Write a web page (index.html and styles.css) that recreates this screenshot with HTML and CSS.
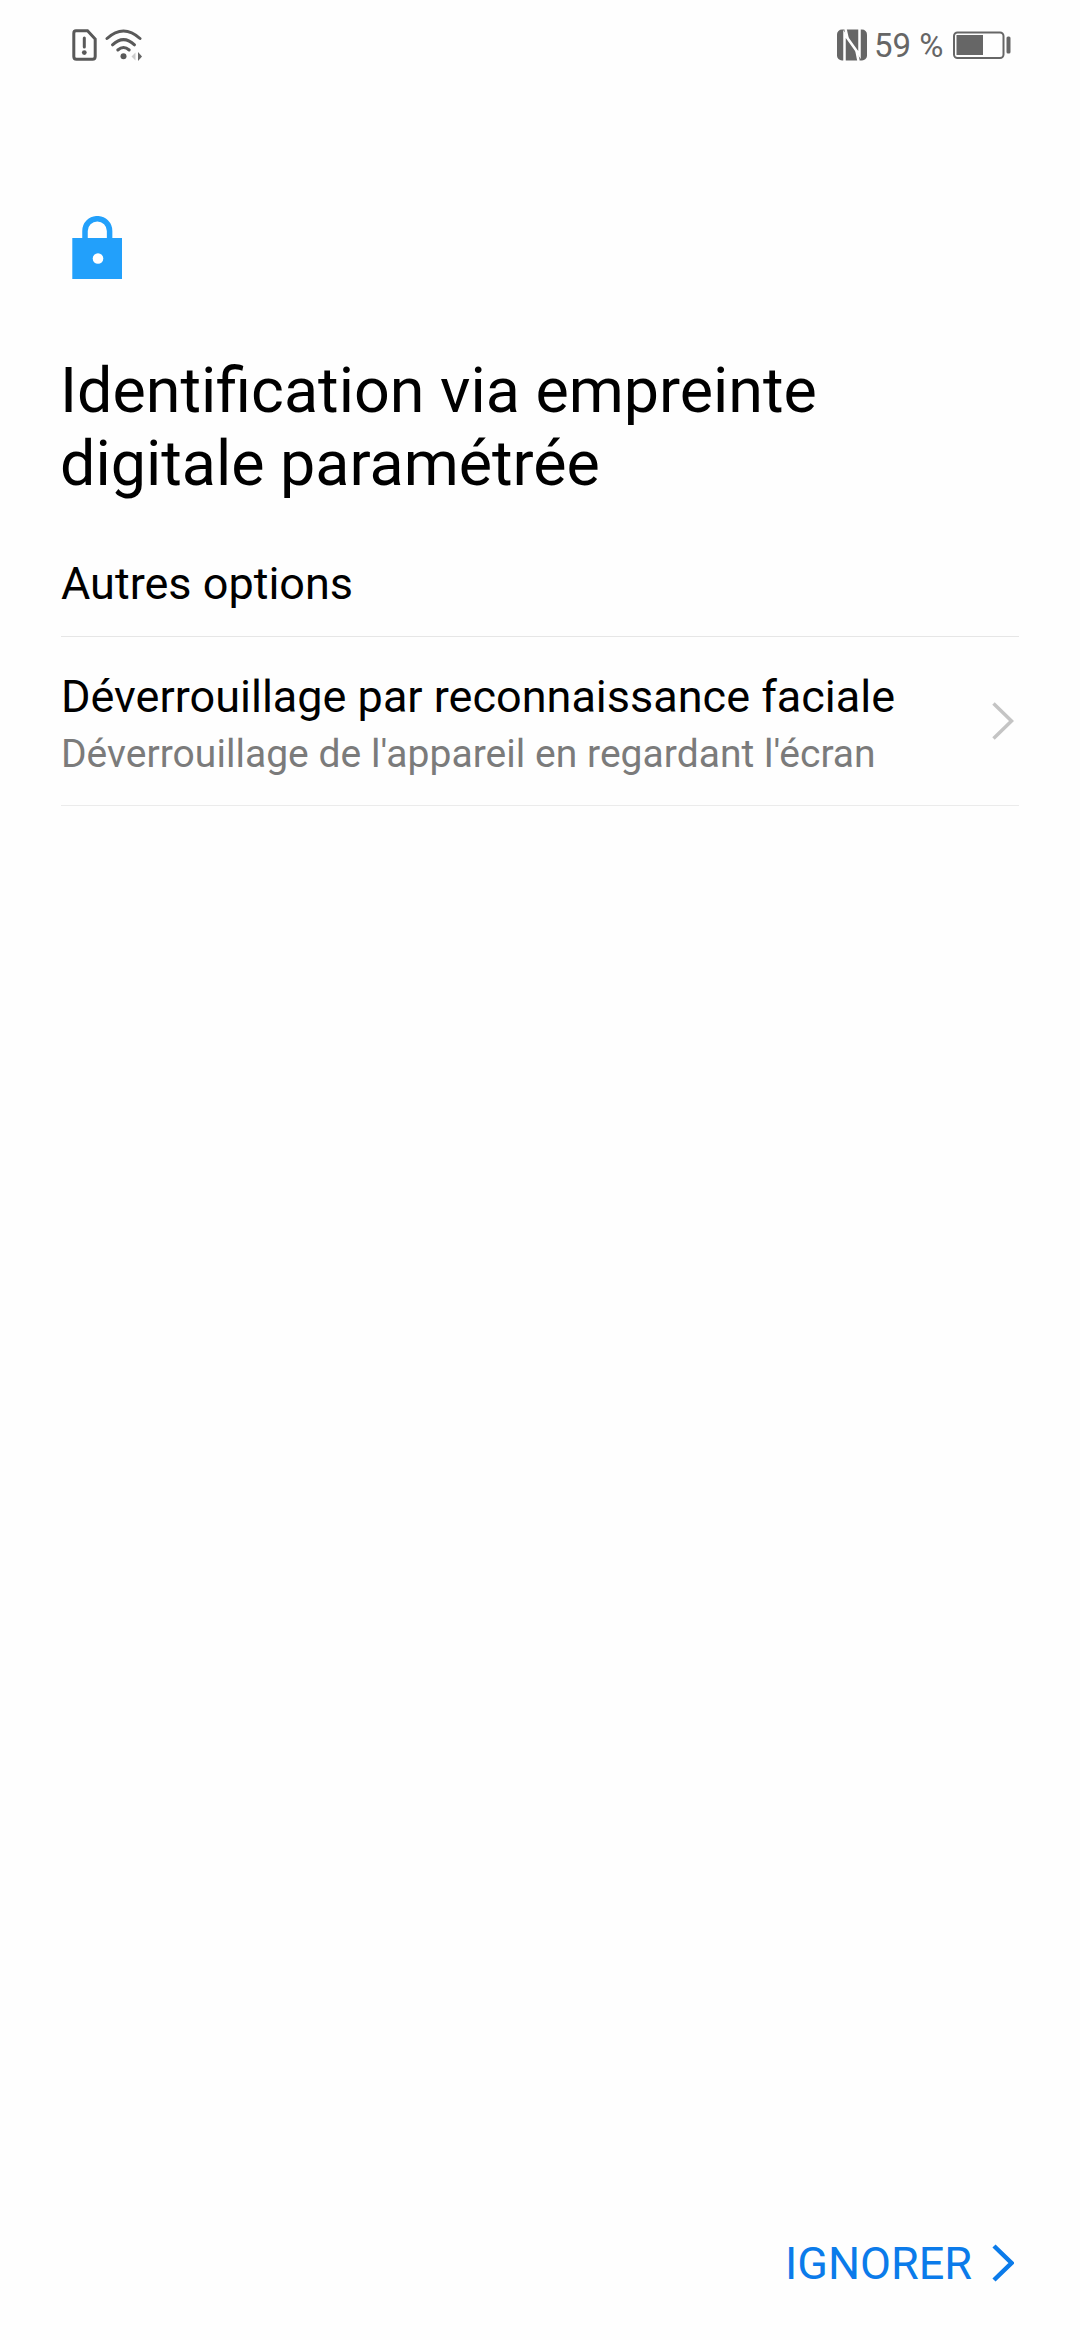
FILE: index.html
```html
<!DOCTYPE html>
<html lang="fr">
  <head>
    <meta charset="UTF-8" />
    <title>Identification via empreinte digitale</title>
    <link rel="stylesheet" href="styles.css">
  </head>
  <body>
    <div class="screen">
      <!-- Status bar -->
      <header class="status-bar">
        <div class="status-left">
          <svg class="icon-sim" width="25" height="32" viewBox="0 0 25 32">
            <path d="M4 1.8H15.5L23.2 10V27.5Q23.2 30.2 20.5 30.2H4.5Q1.8 30.2 1.8 27.5V4.5Q1.8 1.8 4 1.8Z" />
            <path d="M12.3 9V18" />
            <circle cx="12.3" cy="23.6" r="2.4" />
          </svg>
          <svg class="icon-wifi" width="38" height="32" viewBox="0 0 38 32">
            <path d="M2 9.5Q18.5 -5.5 35 9.5" />
            <path d="M7.5 15.8Q18.5 5.5 29.5 15.8" />
            <path d="M12.8 21Q18.5 16 24.2 21" />
            <circle class="dot" cx="18.5" cy="27.2" r="3" />
            <path class="arrow-off" d="M30.5 23.5V31.5L26.5 27.5Z" />
            <path class="arrow-on" d="M33 23V32L37 27.5Z" />
          </svg>
        </div>
        <div class="status-right">
          <svg class="icon-nfc" width="30" height="32" viewBox="0 0 30 32">
            <rect x="0" y="0.5" width="30" height="31" rx="5" />
            <path class="gap" d="M7.5 32V5L22.5 26V0" />
            <path class="gap" d="M8.5 0L10.5 9M21.5 32L19.5 22" />
          </svg>
          <span class="battery-text">59 %</span>
          <svg class="icon-battery" width="58" height="29" viewBox="0 0 58 29">
            <rect class="frame" x="1" y="1.5" width="49.5" height="25.5" rx="3.5" />
            <rect x="3.5" y="4" width="26.5" height="20" />
            <rect x="53.5" y="5.5" width="4" height="17" rx="1.5" />
          </svg>
        </div>
      </header>

      <main class="content">
        <svg class="icon-lock" width="50" height="64" viewBox="0 0 50 64">
          <path class="shackle" d="M13 25V15A12.3 12.3 0 0 1 37.6 15V25" />
          <rect x="0.3" y="22" width="49.9" height="41" />
          <circle cx="26" cy="42.5" r="5.3" />
        </svg>

        <h1 class="title">Identification via empreinte digitale paramétrée</h1>

        <h2 class="section-title">Autres options</h2>

        <div class="option">
          <div class="option-text">
            <div class="option-name">Déverrouillage par reconnaissance faciale</div>
            <div class="option-desc">Déverrouillage de l'appareil en regardant l'écran</div>
          </div>
          <svg class="chevron" width="22" height="38" viewBox="0 0 22 38">
            <path d="M1.5 1.5L19.5 19L1.5 36.5" />
          </svg>
        </div>
      </main>

      <footer class="footer">
        <a class="skip">
          <span>IGNORER</span>
          <svg class="chevron" width="22" height="38" viewBox="0 0 22 38">
            <path d="M2 2L19.5 19L2 36" />
          </svg>
        </a>
      </footer>
    </div>
  </body>
</html>
```

FILE: styles.css
```css
* {
  box-sizing: border-box;
}

body {
  margin: 0;
  background: #fefefe;
  font-family: Roboto, "Liberation Sans", sans-serif;
  color: #000;
}

.screen {
  display: flex;
  flex-direction: column;
  width: 1080px;
  height: 2340px;
  overflow: hidden;
}

/* Status bar */
.status-bar {
  display: flex;
  justify-content: space-between;
  align-items: center;
  height: 90px;
  padding: 0 69px 0 72px;
  color: #666;
}

.status-left,
.status-right {
  display: flex;
  align-items: center;
}

.status-left {
  gap: 8px;
}

.icon-sim,
.icon-wifi {
  fill: none;
  stroke: #595959;
  stroke-width: 3;
  stroke-linecap: round;
}

.icon-sim circle,
.icon-wifi .dot {
  fill: #595959;
  stroke: none;
}

.icon-wifi .arrow-off {
  fill: #ccc;
  stroke: none;
}

.icon-wifi .arrow-on {
  fill: #666;
  stroke: none;
}

.icon-nfc {
  fill: #666;
}

.icon-nfc .gap {
  fill: none;
  stroke: #fefefe;
  stroke-width: 2.5;
}

.battery-text {
  width: 79px;
  margin-left: 7px;
  padding-top: 1px;
  font-size: 33px;
  line-height: 38px;
  white-space: nowrap;
}

.icon-battery {
  fill: #666;
}

.icon-battery .frame {
  fill: none;
  stroke: #666;
  stroke-width: 2;
}

/* Main content */
.content {
  flex: 1;
  padding: 126px 61px 0 61px;
}

.icon-lock {
  display: block;
  margin-left: 11px;
  fill: #22a0fb;
}

.icon-lock .shackle {
  fill: none;
  stroke: #22a0fb;
  stroke-width: 5.5;
}

.icon-lock circle {
  fill: #fff;
}

.title {
  width: 800px;
  margin: 74px 0 0 -1px;
  font-size: 62.8px;
  font-weight: 400;
  line-height: 73px;
}

.section-title {
  margin: 58px 0 0;
  padding-bottom: 26px;
  border-bottom: 1px solid #e6e6e6;
  font-size: 45px;
  font-weight: 400;
  line-height: 52px;
}

.option {
  display: flex;
  justify-content: space-between;
  padding: 34px 5px 28px 0;
  border-bottom: 1px solid #ebebeb;
}

.option .chevron {
  margin-top: 31px;
}

.option-name {
  font-size: 45px;
  line-height: 52px;
}

.option-desc {
  margin-top: 8px;
  font-size: 39px;
  line-height: 46px;
  letter-spacing: 0.03px;
  color: #7b7b7b;
}

.chevron {
  fill: none;
  stroke: #c4c4c4;
  stroke-width: 3.5;
}

/* Bottom action */
.footer {
  display: flex;
  justify-content: flex-end;
  padding: 0 66px 50px 0;
}

.skip {
  display: flex;
  align-items: center;
  gap: 20px;
  font-size: 45px;
  line-height: 52px;
  color: #0b7bea;
}

.skip .chevron {
  margin-top: -2px;
  stroke: #0b7bea;
  stroke-width: 4.5;
}
```
